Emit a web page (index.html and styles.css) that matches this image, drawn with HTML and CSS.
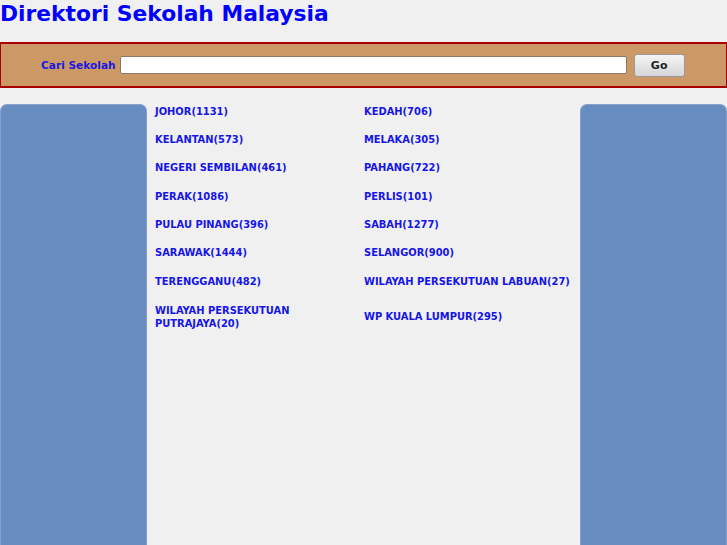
FILE: index.html
```html
<!DOCTYPE html>
<html lang="ms">
<head>
    <meta charset="UTF-8">
    <meta name="viewport" content="width=device-width, initial-scale=1.0">
    <title>Direktori Sekolah Malaysia</title>
    <link rel="stylesheet" href="styles.css">
</head>
<body>
    <header>
        <h1>Direktori Sekolah Malaysia</h1>
    </header>
    <div class="search-bar">
        <label for="cari" class="search-label">Cari Sekolah</label>
        <input type="text" id="cari" class="search-input">
        <button class="search-button">Go</button>
    </div>
    <div class="main">
        <div class="side"></div>
        <div class="content">
            <table class="negeri">
                <tr>
                    <td><a href="#">JOHOR(1131)</a></td>
                    <td><a href="#">KEDAH(706)</a></td>
                </tr>
                <tr>
                    <td><a href="#">KELANTAN(573)</a></td>
                    <td><a href="#">MELAKA(305)</a></td>
                </tr>
                <tr>
                    <td><a href="#">NEGERI SEMBILAN(461)</a></td>
                    <td><a href="#">PAHANG(722)</a></td>
                </tr>
                <tr>
                    <td><a href="#">PERAK(1086)</a></td>
                    <td><a href="#">PERLIS(101)</a></td>
                </tr>
                <tr>
                    <td><a href="#">PULAU PINANG(396)</a></td>
                    <td><a href="#">SABAH(1277)</a></td>
                </tr>
                <tr>
                    <td><a href="#">SARAWAK(1444)</a></td>
                    <td><a href="#">SELANGOR(900)</a></td>
                </tr>
                <tr>
                    <td><a href="#">TERENGGANU(482)</a></td>
                    <td><a href="#">WILAYAH PERSEKUTUAN LABUAN(27)</a></td>
                </tr>
                <tr class="dua-baris">
                    <td><a href="#">WILAYAH PERSEKUTUAN<br>PUTRAJAYA(20)</a></td>
                    <td><a href="#">WP KUALA LUMPUR(295)</a></td>
                </tr>
            </table>
        </div>
        <div class="side"></div>
    </div>
</body>
</html>
```

FILE: styles.css
```css
body {
    font-family: "DejaVu Sans", Verdana, sans-serif;
    background-color: #f0f0f0;
    margin: 0;
    padding: 0;
}
header h1 {
    margin: 0;
    height: 42px;
    font-size: 21.8px;
    line-height: 28px;
    color: #0000ff;
}
.search-bar {
    display: flex;
    align-items: center;
    height: 42px;
    background-color: #cc9966;
    border: 2px solid #aa0000;
    border-left-width: 1px;
    border-right-width: 1px;
}
.search-label {
    margin-left: 40px;
    margin-right: 4px;
    font-size: 10.6px;
    font-weight: bold;
    color: #1a1ae0;
}
.search-input {
    width: 503px;
    height: 14px;
    padding: 1px;
    border: 1px solid #8a7a6a;
    border-radius: 2px;
    background-color: #fff;
}
.search-button {
    margin-left: 7px;
    width: 51px;
    height: 23px;
    font-family: "DejaVu Sans", Verdana, sans-serif;
    font-size: 11px;
    font-weight: bold;
    color: #222;
    border: 1px solid #999;
    border-radius: 3px;
    background: linear-gradient(#f4f4f4, #d6d6d8);
}
.main {
    display: flex;
    margin-top: 16px;
}
.side {
    width: 145px;
    height: 460px;
    background-color: #678cc0;
    border: 1px solid #85a2cc;
    border-bottom: none;
    border-radius: 7px 7px 0 0;
}
.content {
    flex: 1;
    padding: 0 0 0 8px;
    margin-top: -7px;
}
.negeri {
    border-collapse: collapse;
}
.negeri td {
    padding: 7.67px 0;
    line-height: 13px;
    font-family: "DejaVu Sans Condensed", "DejaVu Sans", sans-serif;
    font-stretch: condensed;
    font-size: 11px;
    font-weight: bold;
    vertical-align: middle;
}
.negeri .dua-baris td {
    padding: 8.33px 0;
}
.negeri td:first-child {
    width: 209px;
}
.negeri a {
    color: #1515e8;
    text-decoration: none;
}
```
